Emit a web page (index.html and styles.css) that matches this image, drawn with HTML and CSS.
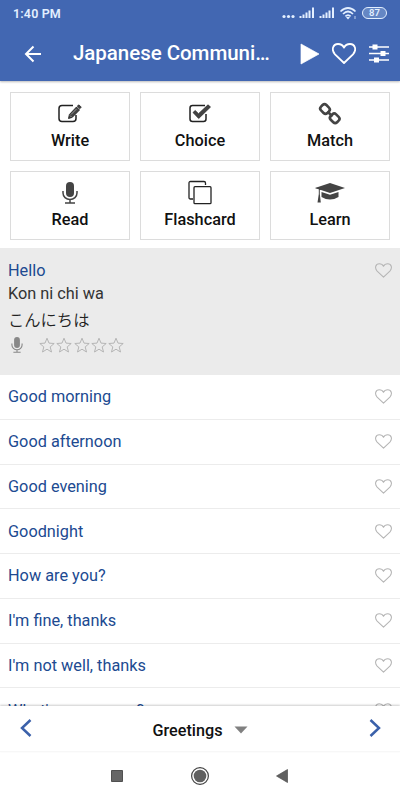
FILE: index.html
```html
<!DOCTYPE html>
<html lang="en">
<head>
<meta charset="utf-8">
<title>Japanese Communication</title>
<link rel="stylesheet" href="styles.css">
</head>
<body>
<svg class="defs" width="0" height="0">
  <defs>
    <symbol id="heart" viewBox="0 0 24 21"><path d="M12 20 3 11.3C-1 7 .9 1 6 1c3 0 5 1.600 6 3.600C13 2.600 15 1 18 1c5.100 0 7 6 3 10.300Z" fill="none" stroke="currentColor" stroke-linejoin="round"/></symbol>
    <symbol id="star" viewBox="0 0 16 16"><path d="m8 1.200 2 4.900 5.200.4-4 3.400 1.300 5.100L8 12.200l-4.500 2.800 1.300-5.100-4-3.400L6 6.100Z" fill="none" stroke="currentColor"/></symbol>
    <symbol id="mic" viewBox="0 0 16 22"><rect x="4" y="0" width="8" height="15" rx="4" fill="currentColor"/><path d="M1 9v2a7 6.500 0 0 0 14 0V9M8 17.500V21M3 21h10" fill="none" stroke="currentColor" stroke-width="1.500"/></symbol>
    <symbol id="signal" viewBox="0 0 16 12"><path d="M1.500 11v-2M4.500 11V7.500M7.500 11V5.500M10.500 11V3.500M14 11V.5" stroke="currentColor" stroke-width="2"/></symbol>
  </defs>
</svg>
<div class="screen">
  <header class="top">
    <div class="status">
      <span class="time">1:40 PM</span>
      <svg class="dots" width="13" height="12"><circle cx="2" cy="9.500" r="1.600"/><circle cx="6.500" cy="9.500" r="1.600"/><circle cx="11" cy="9.500" r="1.600"/></svg>
      <svg class="signal" width="16" height="12"><use href="#signal"/></svg>
      <svg class="signal second" width="16" height="12"><use href="#signal"/></svg>
      <svg class="wifi" width="17" height="13" viewBox="0 0 17 13"><path d="M.5 4.500Q8-2.500 15.500 4.500M3 7Q8 2 13 7M5.400 9.300Q8 6.800 10.600 9.300" fill="none" stroke="currentColor" stroke-width="1.700"/><path d="m8 12.500-2-2.200q2-1.300 4 0Z" fill="currentColor"/><path d="M15 9v3" stroke="currentColor" stroke-width=".8"/></svg>
      <span class="battery">87</span>
    </div>
    <div class="appbar">
      <svg class="back" width="18" height="18" viewBox="0 0 18 18"><path d="M17 9H2M9.500 1.500 2 9l7.500 7.500" fill="none" stroke="currentColor" stroke-width="2"/></svg>
      <h1>Japanese Communi…</h1>
      <svg class="play" width="20" height="22"><path d="M1 1v20l18-10Z" fill="currentColor" stroke="currentColor" stroke-width=".7"/></svg>
      <svg class="fav" width="24" height="21"><use href="#heart"/></svg>
      <svg class="tune" width="20" height="19" viewBox="0 0 20 19"><path d="M0 3h20M0 9.500h20M0 16h20" stroke="currentColor" stroke-width="1.600"/><path d="M3.500.5h5v5h-5ZM11.500 7h5v5h-5ZM5 13.500h5v5H5Z" fill="currentColor"/></svg>
    </div>
  </header>
  <section class="modes">
    <div class="card"><svg width="24" height="22" viewBox="0 0 24 22" fill="none" stroke="#222"><path d="M15 2.500H4Q1 2.500 1 5.500v10q0 3 3 3h11q3 0 3-3V12" stroke-width="1.500"/><path d="m10.500 15.500.9-4L18.500 4l3 3-7.300 7.400ZM19.300 3.200l1-1q.5-.5 1 0l1.500 1.500q.5.500 0 1l-.8.900Z" fill="#444" stroke-width=".9"/><path d="m12 12.500 1.700 1.700M13 11.500l5.500-5.500" stroke="#ccc" stroke-width=".6"/></svg><span>Write</span></div>
    <div class="card"><svg width="24" height="22" viewBox="0 0 24 22"><path d="M17 2.500H4.500Q2 2.500 2 5v11q0 2.500 2.500 2.500h11Q18 18.500 18 16v-5" fill="none" stroke="#222" stroke-width="1.500"/><path d="m5 9.500 2.200-2 3.300 3.200L20 1.800l2.500 2.200L10.700 15.500Z" fill="#444" stroke="#222" stroke-width=".7"/></svg><span>Choice</span></div>
    <div class="card"><svg width="24" height="22" viewBox="0 0 24 22" fill="none" stroke="#444" stroke-width="2.600"><rect x="-4.500" y="-3.800" width="9" height="7.600" rx="2.700" transform="translate(7 6) rotate(45)"/><rect x="-4.500" y="-3.800" width="9" height="7.600" rx="2.700" transform="translate(16.700 15.300) rotate(45)"/><path d="m9.500 8.500 5 5"/></svg><span>Match</span></div>
    <div class="card"><svg class="mode-mic" width="16" height="22"><use href="#mic"/></svg><span>Read</span></div>
    <div class="card"><svg class="copies" width="24" height="22" viewBox="0 0 24 22" fill="none" stroke="#222" stroke-width="1.300"><path d="M5 17H2.500Q1 17 1 15.500V1Q1-.5 2.500-.5H16q1.500 0 1.500 1.500V3"/><rect x="6" y="4.700" width="17" height="17" rx="1"/></svg><span>Flashcard</span></div>
    <div class="card"><svg width="32" height="22" viewBox="0 0 32 22" fill="#444"><path d="m16 1 15 5-15 5L1 6Z"/><path d="m7.500 10 8.500 2.700 8.500-2.700v5q-8.500 5-17 0Z"/><path d="m1 6 15-1.300v1L5.800 8v4l1 8.500H3.500L4.800 12V7Z"/></svg><span>Learn</span></div>
  </section>
  <main class="phrases">
    <article class="active">
      <div class="copy">
        <p class="phrase">Hello</p>
        <p class="reading">Kon ni chi wa</p>
        <p class="native" lang="ja">こんにちは</p>
        <div class="rating">
          <svg class="mini-mic" width="12" height="16"><use href="#mic"/></svg>
          <svg width="16" height="16"><use href="#star"/></svg><svg width="16" height="16"><use href="#star"/></svg><svg width="16" height="16"><use href="#star"/></svg><svg width="16" height="16"><use href="#star"/></svg><svg width="16" height="16"><use href="#star"/></svg>
        </div>
      </div>
      <svg class="heart" width="17" height="15"><use href="#heart"/></svg>
    </article>
    <div class="row"><span>Good morning</span><svg class="heart" width="17" height="15"><use href="#heart"/></svg></div>
    <div class="row"><span>Good afternoon</span><svg class="heart" width="17" height="15"><use href="#heart"/></svg></div>
    <div class="row"><span>Good evening</span><svg class="heart" width="17" height="15"><use href="#heart"/></svg></div>
    <div class="row"><span>Goodnight</span><svg class="heart" width="17" height="15"><use href="#heart"/></svg></div>
    <div class="row"><span>How are you?</span><svg class="heart" width="17" height="15"><use href="#heart"/></svg></div>
    <div class="row"><span>I'm fine, thanks</span><svg class="heart" width="17" height="15"><use href="#heart"/></svg></div>
    <div class="row"><span>I'm not well, thanks</span><svg class="heart" width="17" height="15"><use href="#heart"/></svg></div>
    <div class="row"><span>What's your name?</span><svg class="heart" width="17" height="15"><use href="#heart"/></svg></div>
  </main>
  <footer class="pager">
    <svg width="12" height="18" viewBox="0 0 12 18"><path d="M10.500 1 2 9l8.500 8" fill="none" stroke="currentColor" stroke-width="2.500"/></svg>
    <div class="category"><span>Greetings</span><svg width="14" height="8"><path d="M.5.5h13L7 7.500Z" fill="#808080"/></svg></div>
    <svg width="12" height="18" viewBox="0 0 12 18"><path d="M1.500 1 10 9l-8.500 8" fill="none" stroke="currentColor" stroke-width="2.500"/></svg>
  </footer>
  <nav class="system">
    <svg width="12" height="12"><path d="M.5.5h11v11H.5Z" fill="#666" stroke="#505050"/></svg>
    <svg width="20" height="20"><circle cx="10" cy="10" r="8.400" fill="none" stroke="#444" stroke-width="1.200"/><circle cx="10" cy="10" r="6.300" fill="#606060"/></svg>
    <svg class="nav-back" width="12" height="14"><path d="M11.500.5v13L.5 7Z" fill="#606060" stroke="#505050" stroke-width=".7"/></svg>
  </nav>
</div>
</body>
</html>
```
FILE: styles.css
```css
* { box-sizing: border-box; }
body { margin: 0; font-family: Roboto, "Noto Sans CJK JP", sans-serif; background: #fff; }
h1, p { margin: 0; }
svg { display: block; flex-shrink: 0; overflow: visible; }
.defs { position: absolute; }
.screen { width: 400px; height: 800px; display: flex; flex-direction: column; overflow: hidden; }
.top { height: 81px; flex-shrink: 0; background: #4267b2; color: #fff; box-shadow: 0 1px 2px #0004; }
.status { height: 26px; display: flex; align-items: center; padding: 0 13px; color: #e3efff; }
.time { font-size: 12.5px; font-weight: 600; letter-spacing: .15px; margin-right: auto; }
.dots { fill: currentColor; margin-right: 4px; }
.second { margin-left: 4px; }
.wifi { margin-left: 5px; }
.battery { width: 25px; height: 12px; margin-left: 5px; border: 1px solid currentColor; border-radius: 6px; background: #6587c4; font-size: 9.5px; line-height: 10px; font-weight: 600; text-align: center; }
.appbar { height: 55px; display: flex; align-items: center; padding: 0 11px 0 24px; }
h1 { width: 227px; margin-left: 31px; font-size: 20.5px; line-height: 26px; font-weight: 500; letter-spacing: -.04px; white-space: nowrap; position: relative; top: -1px; }
.fav { margin-left: 12px; stroke-width: 1.800; }
.tune { margin-left: 13px; }
.modes { height: 167px; flex-shrink: 0; padding: 11px 10px 8px; display: grid; grid-template-columns: repeat(3, 120px); grid-template-rows: 69px 69px; gap: 10px; }
.card { border: 1px solid #dcdcdc; display: flex; flex-direction: column; align-items: center; justify-content: space-between; padding: 10px 0 10px; font-size: 16.3px; line-height: 19px; font-weight: 500; color: #111; }
.mode-mic { color: #444; }
.phrases { flex: 1; min-height: 0; overflow: hidden; font-size: 16.3px; color: #204a91; }
.active { height: 127px; display: flex; justify-content: space-between; padding: 12px 8px 0; background: #ebebeb; }
.active .heart { margin-top: 3px; }
.phrase { line-height: 21px; }
.reading { color: #333; line-height: 26px; }
.native { color: #222; line-height: 24px; font-size: 16.3px; font-family: "Noto Sans CJK JP", sans-serif; font-weight: 350; }
.rating { display: flex; align-items: center; gap: 1.200px; margin-top: 6px; color: #b5b5b5; }
.mini-mic { color: #888; margin: 0 15px 0 3px; }
.row { height: 44.75px; display: flex; align-items: center; justify-content: space-between; padding: 0 8px; border-bottom: 1px solid #ececec; }
.heart { color: #b5b5b5; stroke-width: 1.500; }
.pager { height: 46px; flex-shrink: 0; display: flex; justify-content: space-between; padding: 13px 19px 0 20px; border-bottom: 1px solid #f7f7f7; color: #3b61aa; background: #fff; box-shadow: 0 -1px 2px #0003; position: relative; }
.category { display: flex; align-items: center; height: 22px; gap: 12px; color: #111; font-size: 16.2px; font-weight: 500; }
.system { height: 48px; flex-shrink: 0; display: grid; grid-template-columns: 12px 20px 12px; align-items: center; justify-content: center; column-gap: 67px; background: #fff; }
.nav-back { margin-left: -1px; }
```
